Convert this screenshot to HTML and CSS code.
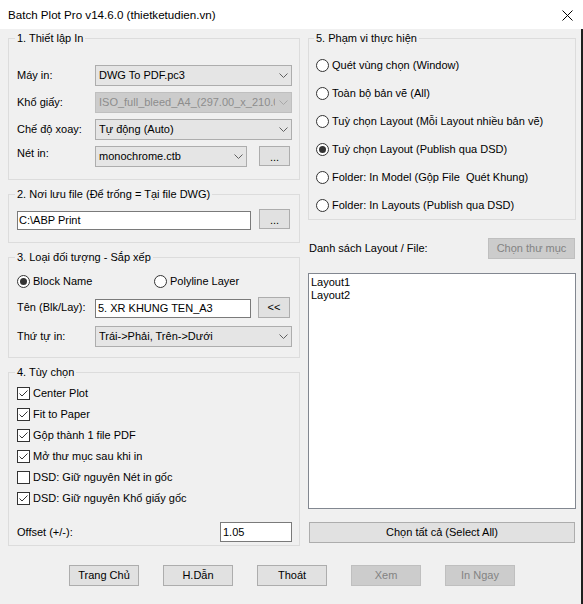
FILE: index.html
```html
<!DOCTYPE html>
<html lang="vi">
<head>
<meta charset="utf-8">
<title>Batch Plot Pro</title>
<link rel="stylesheet" href="styles.css">
</head>
<body>
<div class="window">
  <div class="titlebar">
    <span class="title">Batch Plot Pro v14.6.0 (thietketudien.vn)</span>
    <svg class="close" width="11" height="11" viewBox="0 0 11 11"><path d="M0.5 0.5L10.5 10.5M10.5 0.5L0.5 10.5" stroke="#000" stroke-width="1" fill="none"/></svg>
  </div>
  <div class="client">
    <div class="columns">
      <div class="col">
        <fieldset class="group g1">
          <legend>1. Thiết lập In</legend>
          <div class="rows">
            <div class="form-row">
              <span class="lbl">Máy in:</span>
              <div class="combo w197"><span class="combo-text">DWG To PDF.pc3</span><span class="chev"><svg width="9" height="5" viewBox="0 0 9 5"><polyline points="0.5,0.5 4.5,4.5 8.5,0.5" fill="none" stroke="#606060" stroke-width="1"/></svg></span></div>
            </div>
            <div class="form-row">
              <span class="lbl">Khổ giấy:</span>
              <div class="combo w197 disabled"><span class="combo-text">ISO_full_bleed_A4_(297.00_x_210.00_MM)</span><span class="chev"><svg width="9" height="5" viewBox="0 0 9 5"><polyline points="0.5,0.5 4.5,4.5 8.5,0.5" fill="none" stroke="#a8a8a8" stroke-width="1"/></svg></span></div>
            </div>
            <div class="form-row">
              <span class="lbl">Chế độ xoay:</span>
              <div class="combo w197"><span class="combo-text">Tự động (Auto)</span><span class="chev"><svg width="9" height="5" viewBox="0 0 9 5"><polyline points="0.5,0.5 4.5,4.5 8.5,0.5" fill="none" stroke="#606060" stroke-width="1"/></svg></span></div>
            </div>
            <div class="form-row top">
              <span class="lbl lbl-top">Nét in:</span>
              <div class="combo w152"><span class="combo-text">monochrome.ctb</span><span class="chev"><svg width="9" height="5" viewBox="0 0 9 5"><polyline points="0.5,0.5 4.5,4.5 8.5,0.5" fill="none" stroke="#606060" stroke-width="1"/></svg></span></div>
              <button class="btn dots gap12">...</button>
            </div>
          </div>
        </fieldset>

        <fieldset class="group g2">
          <legend>2. Nơi lưu file (Để trống = Tại file DWG)</legend>
          <div class="form-row top">
            <div class="textbox w234 low">C:\ABP Print</div>
            <button class="btn dots gap8">...</button>
          </div>
        </fieldset>

        <fieldset class="group g3">
          <legend>3. Loại đối tượng - Sắp xếp</legend>
          <div class="radio-pair">
            <label class="radio on w137"><span class="dot"></span>Block Name</label>
            <label class="radio"><span class="dot"></span>Polyline Layer</label>
          </div>
          <div class="form-row end mt9">
            <span class="lbl lbl-mid">Tên (Blk/Lay):</span>
            <div class="textbox w156 h19 pad2">5. XR KHUNG TEN_A3</div>
            <button class="btn back">&lt;&lt;</button>
          </div>
          <div class="form-row mt8">
            <span class="lbl">Thứ tự in:</span>
            <div class="combo w197"><span class="combo-text">Trái-&gt;Phải, Trên-&gt;Dưới</span><span class="chev"><svg width="9" height="5" viewBox="0 0 9 5"><polyline points="0.5,0.5 4.5,4.5 8.5,0.5" fill="none" stroke="#606060" stroke-width="1"/></svg></span></div>
          </div>
        </fieldset>

        <fieldset class="group g4">
          <legend>4. Tùy chọn</legend>
          <label class="cb on"><span class="box"><svg width="11" height="11" viewBox="0 0 11 11"><polyline points="1.5,5.5 4,8 9.5,2.5" fill="none" stroke="#333" stroke-width="1"/></svg></span>Center Plot</label>
          <label class="cb on"><span class="box"><svg width="11" height="11" viewBox="0 0 11 11"><polyline points="1.5,5.5 4,8 9.5,2.5" fill="none" stroke="#333" stroke-width="1"/></svg></span>Fit to Paper</label>
          <label class="cb on"><span class="box"><svg width="11" height="11" viewBox="0 0 11 11"><polyline points="1.5,5.5 4,8 9.5,2.5" fill="none" stroke="#333" stroke-width="1"/></svg></span>Gộp thành 1 file PDF</label>
          <label class="cb on"><span class="box"><svg width="11" height="11" viewBox="0 0 11 11"><polyline points="1.5,5.5 4,8 9.5,2.5" fill="none" stroke="#333" stroke-width="1"/></svg></span>Mở thư mục sau khi in</label>
          <label class="cb"><span class="box"></span>DSD: Giữ nguyên Nét in gốc</label>
          <label class="cb on"><span class="box"><svg width="11" height="11" viewBox="0 0 11 11"><polyline points="1.5,5.5 4,8 9.5,2.5" fill="none" stroke="#333" stroke-width="1"/></svg></span>DSD: Giữ nguyên Khổ giấy gốc</label>
          <div class="offset-row">
            <span>Offset (+/-):</span>
            <div class="textbox w72 h20 pad2">1.05</div>
          </div>
        </fieldset>
      </div>

      <div class="col">
        <fieldset class="group g5">
          <legend>5. Phạm vi thực hiện</legend>
          <div class="radio-list">
            <label class="radio"><span class="dot"></span>Quét vùng chọn (Window)</label>
            <label class="radio"><span class="dot"></span>Toàn bộ bản vẽ (All)</label>
            <label class="radio"><span class="dot"></span>Tuỳ chọn Layout (Mỗi Layout nhiều bản vẽ)</label>
            <label class="radio on"><span class="dot"></span>Tuỳ chọn Layout (Publish qua DSD)</label>
            <label class="radio"><span class="dot"></span>Folder: In Model (Gộp File&nbsp; Quét Khung)</label>
            <label class="radio"><span class="dot"></span>Folder: In Layouts (Publish qua DSD)</label>
          </div>
        </fieldset>
        <div class="list-header">
          <span class="list-title">Danh sách Layout / File:</span>
          <button class="btn disabled folder-btn">Chọn thư mục</button>
        </div>
        <div class="listbox">
          <div class="item">Layout1</div>
          <div class="item">Layout2</div>
        </div>
        <button class="btn select-all">Chọn tất cả (Select All)</button>
      </div>
    </div>

    <div class="actions">
      <button class="btn act">Trang Chủ</button>
      <button class="btn act">H.Dẫn</button>
      <button class="btn act">Thoát</button>
      <button class="btn act disabled">Xem</button>
      <button class="btn act disabled">In Ngay</button>
    </div>
  </div>
</div>
</body>
</html>
```

FILE: styles.css
```css
* { box-sizing: border-box; }
html, body { margin: 0; padding: 0; }
body {
  width: 583px;
  height: 604px;
  overflow: hidden;
  background: #f0f0f0;
  font-family: "Liberation Sans", Arial, sans-serif;
  font-size: 11px;
  line-height: 13px;
  color: #000;
}
.window { display: flex; flex-direction: column; height: 604px; }

.titlebar {
  height: 29px;
  flex: none;
  background: #fff;
  display: flex;
  align-items: center;
  justify-content: space-between;
  padding: 0 10px 0 8px;
}
.title { font-size: 11.6px; line-height: 14px; padding-top: 1px; }
.close { display: block; margin-top: 1px; }

.client {
  flex: 1;
  border-right: 2px solid #1f1f1f;
}
.columns {
  display: grid;
  grid-template-columns: 292px 268px;
  column-gap: 8px;
  padding: 3px 0 0 8px;
}
.col { display: flex; flex-direction: column; }

.group {
  margin: 0;
  min-width: 0;
  border: 1px solid #dcdcdc;
  padding: 0 7px 0 8px;
}
.group legend {
  font-size: 11px;
  line-height: 13px;
  padding: 0 2px;
  margin-left: -2px;
}
.g1 { height: 148px; padding-top: 20px; }
.g2 { height: 55px; padding-top: 8px; margin-top: 8px; }
.g3 { height: 107px; padding-top: 11px; margin-top: 8px; }
.g4 { height: 180px; padding-top: 4px; margin-top: 8px; }
.g5 { height: 188px; padding-top: 12px; padding-left: 7px; }

.rows { display: flex; flex-direction: column; gap: 6px; }
.form-row { display: flex; align-items: center; height: 21px; }
.form-row.top { align-items: flex-start; }
.form-row.end { align-items: flex-end; }
.mt9 { margin-top: 9px; }
.mt8 { margin-top: 8px; }
.lbl { width: 78px; flex: none; white-space: nowrap; }
.lbl-top { padding-top: 1px; }
.lbl-mid { align-self: center; }

.combo {
  height: 21px;
  flex: none;
  display: flex;
  align-items: center;
  background: #e5e5e5;
  border: 1px solid #adadad;
  padding-left: 3px;
}
.combo-text { flex: 1; overflow: hidden; white-space: nowrap; min-width: 0; }
.chev { width: 16px; flex: none; display: flex; justify-content: center; align-items: center; }
.chev svg { display: block; }
.combo.disabled { background: #cccccc; border-color: #bfbfbf; color: #8d8d8d; }
.w197 { width: 197px; }
.w152 { width: 152px; }

.textbox {
  background: #fff;
  border: 1px solid #7a7a7a;
  height: 19px;
  padding-left: 1px;
  display: flex;
  align-items: center;
  white-space: nowrap;
  overflow: hidden;
  flex: none;
}
.textbox.low { margin-top: 2px; }
.pad2 { padding-left: 2px; }
.w234 { width: 234px; }
.w156 { width: 156px; }
.w72 { width: 72px; }
.h19 { height: 19px; }
.h20 { height: 20px; }

.btn {
  font-family: inherit;
  font-size: 11px;
  line-height: 13px;
  color: #000;
  background: #e1e1e1;
  border: 1px solid #adadad;
  border-radius: 0;
  padding: 0;
  margin: 0;
  height: 21px;
  text-align: center;
  flex: none;
}
.btn.disabled { background: #cccccc; border-color: #bfbfbf; color: #838383; }
.dots { width: 31px; height: 20px; padding-top: 2px; }
.gap12 { margin-left: 12px; }
.gap8 { margin-left: 8px; }
.back { width: 32px; height: 21px; margin-left: 7px; }

.radio-pair { display: flex; height: 13px; align-items: center; }
.w137 { width: 137px; }
.radio { display: flex; align-items: center; white-space: nowrap; }
.radio .dot {
  width: 13px;
  height: 13px;
  border: 1px solid #333;
  border-radius: 50%;
  background: #fff;
  margin-right: 3px;
  flex: none;
  display: flex;
  align-items: center;
  justify-content: center;
}
.radio.on .dot::after {
  content: "";
  width: 7px;
  height: 7px;
  border-radius: 50%;
  background: #333;
}
.radio-list { display: flex; flex-direction: column; gap: 12px; }
.radio-list .radio { height: 16px; }

.cb { display: flex; align-items: center; height: 21px; white-space: nowrap; }
.cb .box {
  width: 13px;
  height: 13px;
  border: 1px solid #333;
  background: #fff;
  margin-right: 3px;
  flex: none;
  display: flex;
  align-items: center;
  justify-content: center;
}
.cb .box svg { display: block; }
.offset-row {
  display: flex;
  justify-content: space-between;
  align-items: center;
  height: 20px;
  margin-top: 13px;
}

.list-header {
  display: flex;
  justify-content: space-between;
  align-items: center;
  height: 21px;
  margin-top: 18px;
}
.list-title { padding-left: 1px; }
.folder-btn { width: 87px; margin-right: 1px; }
.listbox {
  margin-top: 14px;
  height: 236px;
  background: #fff;
  border: 1px solid #828790;
  padding: 2px 2px;
}
.item { height: 13px; line-height: 13px; }
.select-all { margin: 13px 1px 0 1px; height: 21px; }

.actions {
  display: flex;
  justify-content: center;
  gap: 24px;
  margin-top: 19px;
  padding-left: 3px;
}
.act { width: 70px; height: 21px; }
```
